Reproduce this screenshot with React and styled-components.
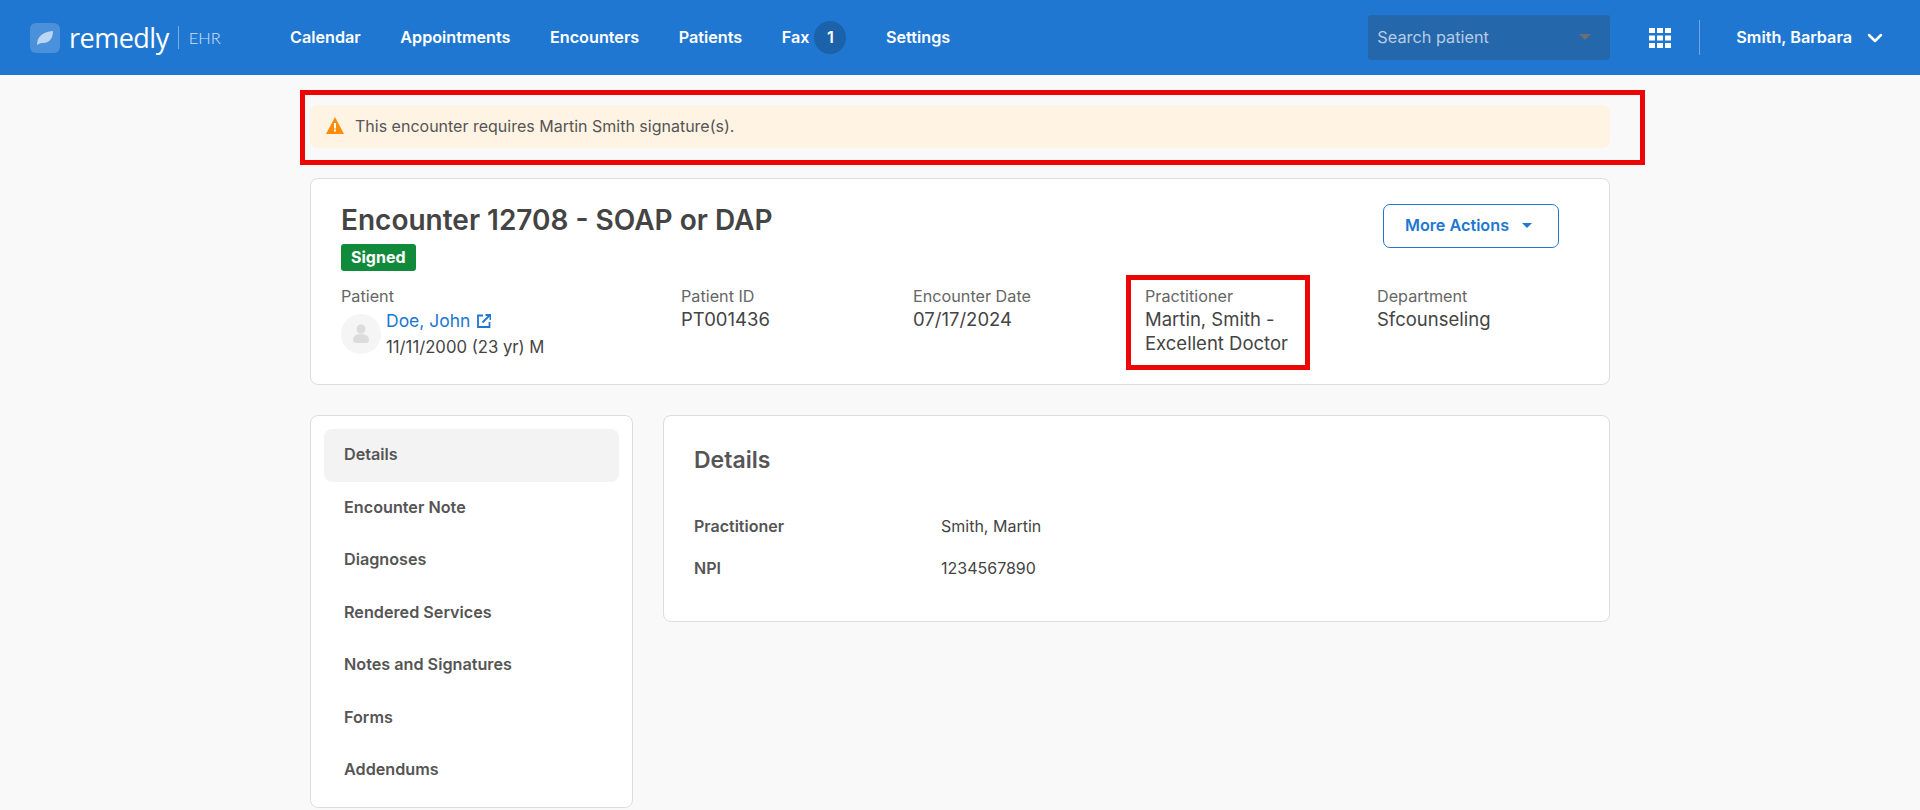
import React from 'react';
import styled, { createGlobalStyle } from 'styled-components';
import { ChevronDown } from 'lucide-react';

const GlobalStyle = createGlobalStyle`
  html, body {
    margin: 0;
    padding: 0;
    background: #f9f9f9;
    font-family: 'Inter', 'Liberation Sans', sans-serif;
    color: #444;
  }
  * {
    box-sizing: border-box;
  }
`;

const Header = styled.header`
  height: 75px;
  background: #2077d1;
  display: flex;
  align-items: center;
  padding-left: 30px;
  color: #fff;
`;

const Logo = styled.div`
  display: flex;
  align-items: center;
  width: 260px;
`;

const LogoMark = styled.div`
  width: 30px;
  height: 30px;
  border-radius: 6px;
  background: #4a90da;
  display: flex;
  align-items: center;
  justify-content: center;
`;

const LogoName = styled.span`
  font-family: 'Open Sans', sans-serif;
  font-weight: 400;
  font-size: 27px;
  letter-spacing: -0.5px;
  margin-left: 9px;
  line-height: 30px;
`;

const LogoProduct = styled.span`
  font-family: 'Lato', sans-serif;
  font-weight: 300;
  font-size: 16.5px;
  color: #cfe2f6;
  margin-left: 9px;
  padding-left: 10px;
  border-left: 1px solid #77ade6;
  height: 23px;
  line-height: 25px;
`;

const Nav = styled.nav`
  display: flex;
  align-items: center;
  gap: 39.5px;
`;

const NavItem = styled.a`
  font-size: 16.2px;
  font-weight: 600;
  color: #fff;
  display: flex;
  align-items: center;
  gap: 5px;
`;

const NavLabel = styled.span`
  padding-bottom: 2px;
`;

const Badge = styled.span`
  width: 32px;
  height: 33px;
  border-radius: 50%;
  background: #1b62ab;
  display: flex;
  align-items: center;
  justify-content: center;
  padding-bottom: 2px;
`;

const HeaderRight = styled.div`
  margin-left: auto;
  display: flex;
  align-items: center;
`;

const Search = styled.div`
  width: 242px;
  height: 45px;
  border-radius: 3px;
  background: #2567ab;
  display: flex;
  align-items: center;
  justify-content: space-between;
  padding: 0 19px 2px 9px;
  font-size: 16.3px;
  color: #b7cde5;
`;

const Caret = styled.span`
  width: 0;
  height: 0;
  border-left: ${p => p.$size}px solid transparent;
  border-right: ${p => p.$size}px solid transparent;
  border-top: ${p => p.$size}px solid ${p => p.$color};
`;

const GridIcon = styled.svg`
  margin-left: 39px;
  display: block;
`;

const HeaderDivider = styled.div`
  width: 1px;
  height: 35px;
  background: #6ea6e2;
  margin: 0 36px 0 28px;
`;

const UserName = styled.div`
  font-size: 16.2px;
  font-weight: 600;
  display: flex;
  align-items: center;
  gap: 11px;
  padding-right: 33px;
`;

const Main = styled.main`
  width: 1300px;
  margin: 0 auto;
`;

const AlertBar = styled.div`
  position: relative;
  margin-top: 30px;
  height: 43px;
  background: #fff3e3;
  border-radius: 8px;
  display: flex;
  align-items: center;
  gap: 11px;
  padding: 0 0 2px 16px;
  font-size: 16px;
  color: #555;
`;

const RedFrame = styled.div`
  position: absolute;
  border: 5px solid #ec0606;
  pointer-events: none;
`;

const AlertFrame = styled(RedFrame)`
  left: -10px;
  right: -35px;
  top: -15px;
  bottom: -17px;
`;

const PractitionerFrame = styled(RedFrame)`
  left: -19px;
  top: -10px;
  width: 184px;
  height: 95px;
`;

const Card = styled.section`
  background: #fff;
  border: 1px solid #ddd;
  border-radius: 8px;
`;

const EncounterCard = styled(Card)`
  margin-top: 30px;
  height: 207px;
  padding: 23px 50px 0 30px;
`;

const EncounterTop = styled.div`
  display: flex;
  justify-content: space-between;
  align-items: flex-start;
`;

const Title = styled.h1`
  margin: 0;
  font-size: 28px;
  line-height: 36px;
  font-weight: 600;
  color: #444;
`;

const StatusBadge = styled.span`
  display: inline-block;
  height: 27px;
  line-height: 26px;
  margin-top: 6px;
  padding: 0 10px;
  border-radius: 3px;
  background: #128a3c;
  color: #fff;
  font-size: 16px;
  font-weight: 700;
`;

const ActionsButton = styled.button`
  margin-top: 2px;
  width: 176px;
  height: 44px;
  padding: 0 5px 2px 0;
  border: 1px solid #2077d1;
  border-radius: 7px;
  background: #fff;
  color: #2077d1;
  font-family: inherit;
  font-size: 16.2px;
  font-weight: 600;
  display: flex;
  align-items: center;
  justify-content: center;
  gap: 13px;
`;

const MetaRow = styled.div`
  display: grid;
  grid-template-columns: 340px 232px 232px 232px 1fr;
  margin-top: 14px;
`;

const MetaItem = styled.div`
  position: relative;
`;

const MetaLabel = styled.div`
  font-size: 16.2px;
  line-height: 22px;
  color: #666;
`;

const MetaValue = styled.div`
  font-size: 18.5px;
  line-height: 23.5px;
  margin-top: 1px;
  color: #444;
`;

const PatientRow = styled.div`
  display: flex;
  gap: 5px;
  margin-top: 7px;
`;

const Avatar = styled.div`
  width: 40px;
  height: 40px;
  border-radius: 50%;
  background: #f5f5f5;
  display: flex;
  align-items: center;
  justify-content: center;
`;

const PatientText = styled.div`
  font-size: 16.7px;
  line-height: 26px;
  margin-top: -6px;
`;

const PatientLink = styled.a`
  color: #2077d1;
  font-size: 17.5px;
  display: flex;
  align-items: center;
  gap: 7px;
`;

const Columns = styled.div`
  display: flex;
  gap: 30px;
  margin-top: 30px;
  align-items: flex-start;
`;

const Sidebar = styled(Card)`
  width: 323px;
  height: 393px;
  padding: 13px;
`;

const SideItem = styled.div`
  height: 52.5px;
  padding: 0 0 2px 20px;
  border-radius: 8px;
  display: flex;
  align-items: center;
  font-size: 16.2px;
  font-weight: 600;
  color: #555;
  background: ${p => (p.$active ? '#f3f3f3' : 'transparent')};
`;

const DetailsCard = styled(Card)`
  flex: 1;
  height: 207px;
  padding: 26px 30px 0;
`;

const DetailsTitle = styled.h2`
  margin: 0 0 27px;
  font-size: 23px;
  line-height: 36px;
  font-weight: 600;
  color: #555;
`;

const DetailRow = styled.div`
  display: grid;
  grid-template-columns: 247px 1fr;
  height: 42px;
  align-items: center;
  font-size: 16px;
  color: #444;
`;

const DetailLabel = styled.span`
  font-weight: 600;
  color: #555;
`;

const navItems = ['Calendar', 'Appointments', 'Encounters', 'Patients'];
const sideItems = ['Details', 'Encounter Note', 'Diagnoses', 'Rendered Services', 'Notes and Signatures', 'Forms', 'Addendums'];

const App = () => (
  <>
    <GlobalStyle />
    <Header>
      <Logo>
        <LogoMark>
          <svg width="18" height="16" viewBox="0 0 18 16">
            <path d="M1 15C1 7 6 2 17 1c0 8-4 12-10 12-2 0-3 0-4 1z" fill="#b9d6f3" />
          </svg>
        </LogoMark>
        <LogoName>remedly</LogoName>
        <LogoProduct>EHR</LogoProduct>
      </Logo>
      <Nav>
        {navItems.map(item => <NavItem key={item}><NavLabel>{item}</NavLabel></NavItem>)}
        <NavItem><NavLabel>Fax</NavLabel><Badge>1</Badge></NavItem>
        <NavItem><NavLabel>Settings</NavLabel></NavItem>
      </Nav>
      <HeaderRight>
        <Search>
          Search patient
          <Caret $size={6.5} $color="#6b6f73" />
        </Search>
        <GridIcon width="22" height="20" viewBox="0 0 22 20" fill="#fff">
          {[0, 8, 16].map(x => [0, 7.5, 15].map(y => (
            <rect key={`${x}-${y}`} x={x} y={y} width="6" height="5" />
          )))}
        </GridIcon>
        <HeaderDivider />
        <UserName>
          <NavLabel>Smith, Barbara</NavLabel>
          <ChevronDown size={24} strokeWidth={2.5} />
        </UserName>
      </HeaderRight>
    </Header>
    <Main>
      <AlertBar>
        <svg width="18" height="17" viewBox="0 0 18 17">
          <path d="M9 0l9 17H0z" fill="#ff8c0a" />
          <rect x="8" y="6" width="2" height="5.5" fill="#fff" />
          <rect x="8" y="12.5" width="2" height="2" fill="#fff" />
        </svg>
        This encounter requires Martin Smith signature(s).
        <AlertFrame />
      </AlertBar>
      <EncounterCard>
        <EncounterTop>
          <div>
            <Title>Encounter 12708 - SOAP or DAP</Title>
            <StatusBadge>Signed</StatusBadge>
          </div>
          <ActionsButton>
            More Actions
            <Caret $size={5} $color="#2077d1" />
          </ActionsButton>
        </EncounterTop>
        <MetaRow>
          <MetaItem>
            <MetaLabel>Patient</MetaLabel>
            <PatientRow>
              <Avatar>
                <svg width="16" height="20" viewBox="0 0 16 20" fill="#dcdcdc">
                  <circle cx="8" cy="5" r="4.5" />
                  <path d="M0 16c0-4 3-6 8-6s8 2 8 6c0 2-1 3-3 3H3c-2 0-3-1-3-3z" />
                </svg>
              </Avatar>
              <PatientText>
                <PatientLink>
                  Doe, John
                  <svg width="14" height="14" viewBox="0 0 14 14" fill="none" stroke="#2077d1" strokeWidth="1.8">
                    <path d="M6 1.5H1v11.5h11.5V8M5.5 8.5L12.5 1.5M8.5 1h5v5" />
                  </svg>
                </PatientLink>
                11/11/2000 (23 yr) M
              </PatientText>
            </PatientRow>
          </MetaItem>
          <MetaItem>
            <MetaLabel>Patient ID</MetaLabel>
            <MetaValue>PT001436</MetaValue>
          </MetaItem>
          <MetaItem>
            <MetaLabel>Encounter Date</MetaLabel>
            <MetaValue>07/17/2024</MetaValue>
          </MetaItem>
          <MetaItem>
            <MetaLabel>Practitioner</MetaLabel>
            <MetaValue>Martin, Smith -<br />Excellent Doctor</MetaValue>
            <PractitionerFrame />
          </MetaItem>
          <MetaItem>
            <MetaLabel>Department</MetaLabel>
            <MetaValue>Sfcounseling</MetaValue>
          </MetaItem>
        </MetaRow>
      </EncounterCard>
      <Columns>
        <Sidebar>
          {sideItems.map((item, i) => <SideItem key={item} $active={i === 0}>{item}</SideItem>)}
        </Sidebar>
        <DetailsCard>
          <DetailsTitle>Details</DetailsTitle>
          <DetailRow>
            <DetailLabel>Practitioner</DetailLabel>
            <span>Smith, Martin</span>
          </DetailRow>
          <DetailRow>
            <DetailLabel>NPI</DetailLabel>
            <span>1234567890</span>
          </DetailRow>
        </DetailsCard>
      </Columns>
    </Main>
  </>
);

export default App;
